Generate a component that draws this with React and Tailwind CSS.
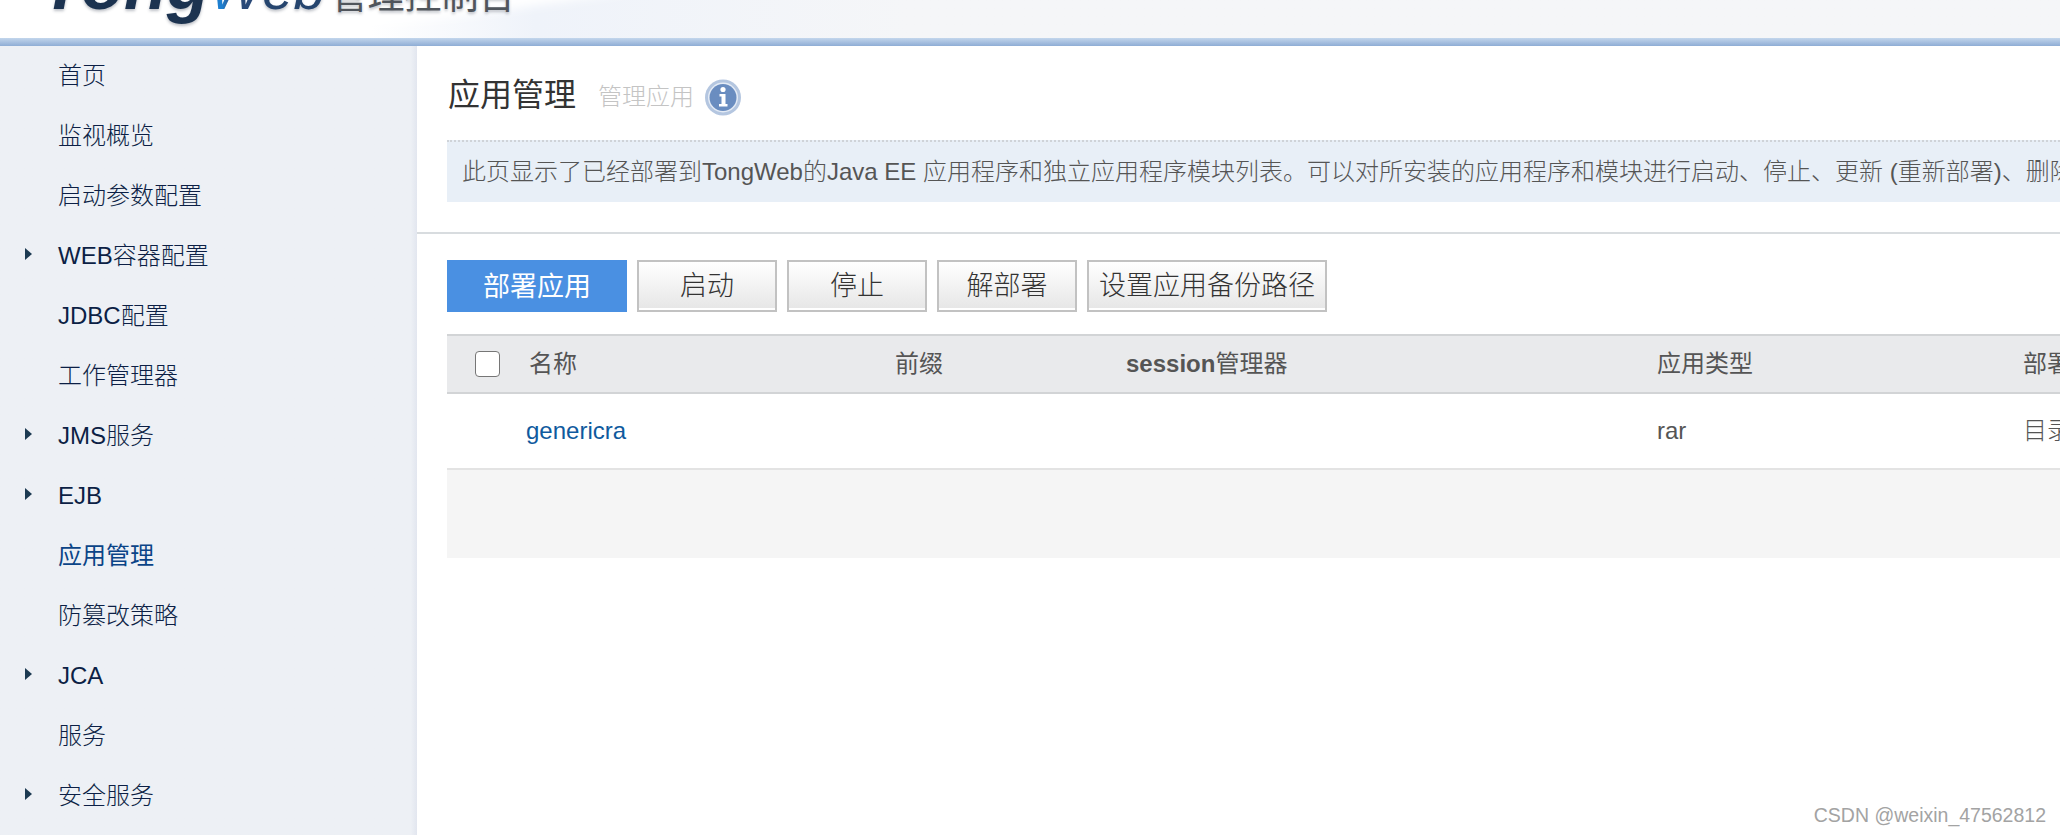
const menu = [
  { label: '首页' },
  { label: '监视概览' },
  { label: '启动参数配置' },
  { label: 'WEB容器配置', arrow: true },
  { label: 'JDBC配置' },
  { label: '工作管理器' },
  { label: 'JMS服务', arrow: true },
  { label: 'EJB', arrow: true },
  { label: '应用管理', active: true },
  { label: '防篡改策略' },
  { label: 'JCA', arrow: true },
  { label: '服务' },
  { label: '安全服务', arrow: true },
  { label: '日志服务' },
];

function Header() {
  return (
    <div className="relative h-[38px] overflow-hidden bg-gradient-to-r from-white from-[18%] via-[#eff3fa] via-[26%] to-[#f5f6f8] to-[44%]">
      {/* soft swoosh behind the logo */}
      <svg className="absolute left-0 top-0" width="800" height="38" viewBox="0 0 800 38">
        <defs>
          <filter id="soft"><feGaussianBlur stdDeviation="5" /></filter>
        </defs>
        <path d="M260 34 C 400 26 480 14 640 -10 L 300 -10 Z" fill="#ffffff" filter="url(#soft)" />
        <path d="M300 30 C 340 32 370 36 400 44 L 280 44 Z" fill="#ffffff" filter="url(#soft)" />
      </svg>
      <div className="absolute left-[41px] top-[-50px] flex items-baseline whitespace-nowrap leading-none [text-shadow:0_2px_3px_rgba(40,50,70,0.3)]">
        <span className="text-[70px] font-bold italic text-[#1c3350] [font-family:'Liberation_Sans',sans-serif]">Tong</span>
        <span className="bg-gradient-to-r from-[#1d7fd0] from-[25%] to-[#2a4a78] to-[45%] bg-clip-text text-[56px] italic text-transparent [font-family:'Liberation_Sans',sans-serif] [text-shadow:none]">W</span>
        <span className="text-[56px] italic text-[#26456e] [font-family:'Liberation_Sans',sans-serif]">eb</span>
        <span className="ml-[6px] text-[37px] text-[#50555c]">管理控制台</span>
      </div>
    </div>
  );
}

function Sidebar() {
  return (
    <div className="w-[417px] shrink-0 bg-gradient-to-r from-[#edf0f5] from-[98.5%] to-[#e2e6ef]">
      {menu.map((item) => (
        <div key={item.label} className="flex h-[60px] items-center">
          <div className="flex w-[58px] shrink-0 justify-start pl-[25px]">
            {item.arrow && (
              <svg width="7" height="12" viewBox="0 0 7 12" className="-mt-1">
                <path d="M0 0 L7 6 L0 12 Z" fill="#1c3a52" />
              </svg>
            )}
          </div>
          <span className={`text-[24px] ${item.active ? 'font-normal text-[#0b4487]' : 'font-light text-[#0c1f45]'}`}>{item.label}</span>
        </div>
      ))}
    </div>
  );
}

function InfoIcon() {
  return (
    <svg width="36" height="37" viewBox="0 0 36 37" className="ml-[11px] mt-[4px]">
      <circle cx="18" cy="18.5" r="18" fill="#b4c6e0" />
      <circle cx="18" cy="18.5" r="15" fill="#e4ebf5" />
      <circle cx="18" cy="18.5" r="13.5" fill="#6a8dc0" />
      <circle cx="18" cy="10.5" r="2.6" fill="#ffffff" />
      <path d="M14.5 15 H20.5 V25 H22.5 V27.5 H14 V25 H16.5 V17.5 H14.5 Z" fill="#ffffff" />
    </svg>
  );
}

function Button({ children, className = '' }) {
  return (
    <div className={`flex h-[52px] items-center justify-center border-2 border-[#c2c2c2] bg-gradient-to-b from-white to-[#e6e6e6] text-[27px] font-light text-[#333333] shadow-[inset_0_-2px_0_#ffffff] ${className}`}>
      {children}
    </div>
  );
}

export default function App() {
  return (
    <div className="h-[835px] w-[2060px] overflow-hidden bg-white text-[#555555] [font-family:'Liberation_Sans','Noto_Sans_CJK_SC',sans-serif]">
      <Header />
      <div className="h-[8px] bg-gradient-to-b from-[#c3d6ec] to-[#8fadd5]" />
      <div className="relative flex h-[789px]">
        <Sidebar />
        <div className="min-w-0 flex-1 overflow-hidden">
          <div className="px-[30px]">
            <div className="flex h-[94px] items-center pt-[4px]">
              <h1 className="ml-[1px] text-[32px] font-normal leading-none text-[#333333]">应用管理</h1>
              <span className="ml-[22px] mt-[4px] text-[24px] font-light leading-none text-[#c4c4c4]">管理应用</span>
              <InfoIcon />
            </div>
            <div className="flex h-[62px] w-[1700px] items-center border-t-2 border-dotted border-[#cfd3d8] bg-[#e8eff7] pl-[15px] text-[24px] font-light whitespace-nowrap">
              此页显示了已经部署到TongWeb的Java EE 应用程序和独立应用程序模块列表。可以对所安装的应用程序和模块进行启动、停止、更新 (重新部署)、删除等操作。
            </div>
          </div>
          <div className="mt-[30px] h-[2px] bg-[#d8dcdf]" />
          <div className="px-[30px]">
            <div className="mt-[26px] flex gap-[10px]">
              <div className="flex h-[52px] w-[180px] items-center justify-center bg-[#4a90e2] pt-[2px] text-[27px] font-normal text-white">部署应用</div>
              <Button className="w-[140px]">启动</Button>
              <Button className="w-[140px]">停止</Button>
              <Button className="w-[140px]">解部署</Button>
              <Button className="w-[240px]">设置应用备份路径</Button>
            </div>
            <div className="mt-[22px] w-[1700px]">
              <div className="flex h-[60px] items-center border-y-2 border-[#d2d4d6] bg-[#e9eaec] text-[24px] whitespace-nowrap">
                <div className="w-[80px] shrink-0 pl-[28px]">
                  <div className="h-[26px] w-[25px] rounded-[4px] border border-[#767676] bg-white" />
                </div>
                <div className="w-[368px] shrink-0 pl-[2px]">名称</div>
                <div className="w-[231px] shrink-0">前缀</div>
                <div className="w-[531px] shrink-0"><span className="font-bold">session</span>管理器</div>
                <div className="w-[366px] shrink-0">应用类型</div>
                <div>部署方式</div>
              </div>
              <div className="flex h-[76px] items-center border-b-2 border-[#e3e3e3] text-[24px] whitespace-nowrap">
                <div className="w-[80px] shrink-0" />
                <div className="-ml-[1px] w-[369px] shrink-0 text-[#0f5a9e]">genericra</div>
                <div className="w-[231px] shrink-0" />
                <div className="w-[531px] shrink-0" />
                <div className="w-[366px] shrink-0">rar</div>
                <div className="font-light">目录</div>
              </div>
              <div className="h-[88px] bg-[#f5f5f5]" />
            </div>
          </div>
        </div>
        <div className="absolute bottom-[5px] right-[14px] text-[19.5px] text-[#a3a3a3]">CSDN @weixin_47562812</div>
      </div>
    </div>
  );
}
